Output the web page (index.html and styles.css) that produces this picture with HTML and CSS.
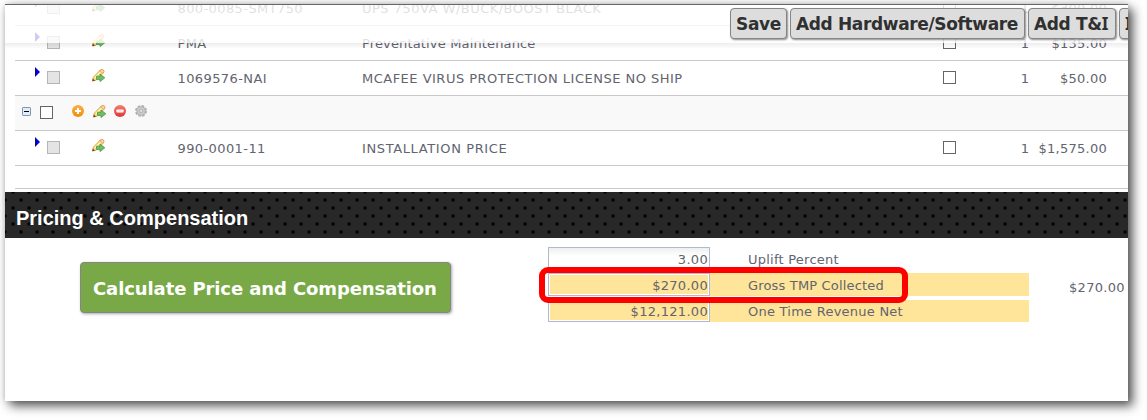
FILE: index.html
```html
<!DOCTYPE html>
<html lang="en">
<head>
<meta charset="utf-8">
<title>Pricing &amp; Compensation</title>
<link rel="stylesheet" href="styles.css">
</head>
<body>
<svg class="defs" width="0" height="0">
  <defs>
    <linearGradient id="orange" x1="0" y1="0" x2="0" y2="1"><stop offset="0" stop-color="#fbb040"/><stop offset="1" stop-color="#f28c0c"/></linearGradient>
    <linearGradient id="red" x1="0" y1="0" x2="0" y2="1"><stop offset="0" stop-color="#f47c70"/><stop offset="1" stop-color="#d93a35"/></linearGradient>
    <symbol id="pencil" viewBox="0 0 13 13">
      <path d="M0.6 11.9 L1.3 8.2 L8.3 1 Q10.2 0 11.5 1.2 Q12.3 2.5 11.3 4 L4 11.3 Z" fill="#f8dc80" stroke="#cf9a48" stroke-width=".8"/>
      <path d="M7.6 1.6 Q10.1 -.1 11.6 1.2 Q12.4 2.6 11 4.4 Z" fill="#fbdcbd" stroke="#dc9550" stroke-width=".7"/>
      <path d="M3 8.8 L8.2 3.6" stroke="#fff4b4" stroke-width="1.4"/>
      <path d="M0.3 12.2 L.8 9.6 L3 11.8 Z" fill="#69401f"/>
      <path d="M4.5 7.2 H8 V5 L12.8 8.8 L8 12.6 V10.6 H4.5 Z" fill="#72bd60" stroke="#4c9646" stroke-width=".8"/>
    </symbol>
    <symbol id="arrow" viewBox="0 0 5 10"><path d="M0 0 L5 5 L0 10 Z" fill="#0000e6"/><path d="M.5 1 V9" stroke="#111155"/></symbol>
  </defs>
</svg>
<main class="panel">
  <section class="items">
    <div class="row">
      <svg class="arrow"><use href="#arrow"/></svg><i class="check off"></i><svg class="pencil"><use href="#pencil"/></svg>
      <span class="code">800-0085-SMT750</span><span class="desc">UPS 750VA W/BUCK/BOOST BLACK</span><i class="check"></i><span class="qty">1</span><span class="price">$300.00</span>
    </div>
    <div class="row">
      <svg class="arrow"><use href="#arrow"/></svg><i class="check off"></i><svg class="pencil"><use href="#pencil"/></svg>
      <span class="code">PMA</span><span class="desc maintenance">Preventative Maintenance</span><i class="check"></i><span class="qty">1</span><span class="price">$135.00</span>
    </div>
    <div class="row">
      <svg class="arrow"><use href="#arrow"/></svg><i class="check off"></i><svg class="pencil"><use href="#pencil"/></svg>
      <span class="code">1069576-NAI</span><span class="desc">MCAFEE VIRUS PROTECTION LICENSE NO SHIP</span><i class="check"></i><span class="qty">1</span><span class="price">$50.00</span>
    </div>
    <div class="group">
      <svg class="collapse" viewBox="0 0 9 9"><rect x=".5" y=".5" width="8" height="8" rx=".6" fill="#e4ebf3" stroke="#7898b8"/><path d="M2 4.5H7" stroke="#000"/></svg>
      <i class="check"></i>
      <div class="tools">
        <svg viewBox="0 0 12 12"><circle cx="6" cy="6" r="6" fill="url(#orange)"/><path d="M6 3V9M3 6H9" stroke="#fff" stroke-width="2"/></svg>
        <svg class="edit"><use href="#pencil"/></svg>
        <svg viewBox="0 0 12 12"><circle cx="6" cy="6" r="6" fill="url(#red)"/><rect x="2.4" y="4.6" width="7.2" height="2.8" rx=".6" fill="#fff"/><path d="M3.2 6H8.8" stroke="#eba7a2" stroke-width=".5"/></svg>
        <svg viewBox="0 0 12 12"><circle cx="6" cy="6" r="4.9" fill="#bdbdbd"/><circle cx="6" cy="6" r="5.2" fill="none" stroke="#ababab" stroke-width="1.5" stroke-dasharray="2.6 1.48"/><circle cx="6" cy="6" r="3.1" fill="none" stroke="#d0d0d0"/><circle cx="6" cy="6" r="1.4" fill="#f5f5f5" stroke="#a5a5a5" stroke-width=".6"/></svg>
      </div>
    </div>
    <div class="row">
      <svg class="arrow"><use href="#arrow"/></svg><i class="check off"></i><svg class="pencil"><use href="#pencil"/></svg>
      <span class="code">990-0001-11</span><span class="desc installation">INSTALLATION PRICE</span><i class="check"></i><span class="qty">1</span><span class="price">$1,575.00</span>
    </div>
    <div class="spacer"></div>
  </section>
  <h2 class="band">Pricing &amp; Compensation</h2>
  <section class="pricing">
    <button class="calculate">Calculate Price and Compensation</button>
    <div class="fields">
      <div class="field"><span class="value">3.00</span><span class="label">Uplift Percent</span></div>
      <div class="field marked"><span class="value">$270.00</span><span class="label gross">Gross TMP Collected</span></div>
      <div class="field marked last"><span class="value">$12,121.00</span><span class="label">One Time Revenue Net</span></div>
      <div class="highlight"></div>
    </div>
    <span class="total">$270.00</span>
  </section>
  <nav class="toolbar">
    <button class="save">Save</button><button class="hardware">Add Hardware/Software</button><button class="ti">Add T&amp;<span class="slab">I</span></button><button class="more"><span class="slab">I</span></button>
  </nav>
</main>
</body>
</html>
```
FILE: styles.css
```css
* { box-sizing: border-box; }
body {
  margin: 0;
  height: 420px;
  padding: 4px 19px 19px 5px;
  overflow: hidden;
  background: #fff;
  color: #62646f;
  font: 13px/16px "DejaVu Sans", sans-serif;
}
.defs { position: absolute; }
.panel {
  position: relative;
  height: 397px;
  border-top: 1px solid #666;
  background: #fff;
  box-shadow: 5px 5px 10px rgba(0,0,0,.64), 0 0 7px rgba(0,0,0,.2);
}
.items { height: 187px; padding-left: 10px; overflow: hidden; }
.row {
  display: grid;
  grid-template-columns: 12px 45px 85.5px 184.5px 581px 48px 38px 78px;
  height: 35px;
  padding-left: 20px;
  border-bottom: 1px solid #c8c8c8;
  white-space: nowrap;
}
.row:first-child { margin-top: -14px; }
.row span { padding-top: 10px; }
.row .check { margin-top: 10px; }
.check { display: block; width: 13px; height: 13px; border: 1px solid #666; background: #fff; }
.check.off { border-color: #b5b5b5; background: #e4e4e4; }
.arrow { width: 5px; height: 10px; margin-top: 6px; }
.pencil { width: 13px; height: 13px; margin-top: 8px; }
.code { letter-spacing: .4px; }
.desc { letter-spacing: .49px; }
.maintenance { letter-spacing: .15px; }
.installation { letter-spacing: .62px; }
.qty { text-align: right; }
.price { text-align: right; letter-spacing: .25px; }
.group {
  display: flex;
  height: 35px;
  padding: 9px 0 0 7px;
  border-bottom: 1px solid #c8c8c8;
  background: #f9f9f9;
}
.collapse { width: 9px; height: 9px; margin: 2px 9px 0 0; }
.group .check { margin-top: 1px; }
.tools { display: flex; gap: 9px; margin-left: 19px; }
.tools svg { width: 12px; height: 12px; }
.tools .edit { width: 13px; height: 13px; margin-right: -1px; }
.spacer { height: 23px; border-bottom: 1px solid #c8c8c8; }
.band {
  height: 46px;
  margin: 0;
  padding: 0 11px;
  color: #fff;
  font: bold 20px/52px "Liberation Sans", Arial, sans-serif;
  background-color: #282828;
  background-image:
    radial-gradient(circle at center, #000 .5px, #0c0c0c 1.3px, rgba(16,16,16,0) 2.4px),
    radial-gradient(circle at center, #000 .5px, #0c0c0c 1.3px, rgba(16,16,16,0) 2.4px);
  background-size: 16px 16px;
  background-position: 8px 0, 0 8px;
}
.pricing { display: flex; padding: 9px 0 0 75px; }
.calculate {
  width: 371px;
  height: 51px;
  margin: 15px 97px 0 0;
  padding: 2px 0 0 12px;
  border: 1px solid #858585;
  border-radius: 4px;
  background: #78a946;
  box-shadow: 1px 1px 3px rgba(0,0,0,.35);
  color: #fff;
  font: bold 18px "DejaVu Sans", sans-serif;
  letter-spacing: -.1px;
  text-align: left;
  white-space: nowrap;
}
.fields { position: relative; width: 481px; }
.field { display: flex; height: 23px; margin-bottom: 3px; }
.value {
  width: 162px;
  padding: 4px 1px 0 0;
  border: 1px solid #b5b7cb;
  background: linear-gradient(#eef0f0, #fff 40%);
  letter-spacing: .3px;
  text-align: right;
}
.label { flex: 1; padding: 5px 0 0 38px; white-space: nowrap; letter-spacing: .24px; }
.gross { letter-spacing: .17px; }
.marked .value { background: #ffe599; box-shadow: inset 0 0 0 1px #fff; }
.marked .label { background: #ffe599; }
.last .label { margin-top: 1px; padding-top: 4px; }
.highlight {
  position: absolute;
  left: -9px;
  top: 20px;
  width: 369px;
  height: 36px;
  border: 6px solid #f00;
  border-radius: 9px;
}
.total { margin: 33px 0 0 40px; letter-spacing: .3px; }
.toolbar {
  position: absolute;
  inset: 0 0 auto;
  display: flex;
  height: 38px;
  padding: 3px 0 0 725px;
  gap: 3px;
  overflow: hidden;
  background: rgba(255,255,255,.8);
}
.panel::after {
  content: "";
  position: absolute;
  left: 0;
  right: 0;
  top: 38px;
  height: 6px;
  background: linear-gradient(rgba(0,0,0,.07), rgba(0,0,0,0));
}
.toolbar button {
  flex: none;
  height: 31px;
  padding: 0 0 0 5px;
  border: 1px solid #858585;
  border-radius: 4px;
  background: #ddd;
  box-shadow: 1px 1px 2px rgba(0,0,0,.45);
  color: #303030;
  font: bold 17px "DejaVu Sans", sans-serif;
  letter-spacing: -.36px;
  text-align: left;
  white-space: nowrap;
}
.slab { font-family: "Noto Sans", "Open Sans", sans-serif; line-height: 1; }
.toolbar .save { width: 57px; }
.toolbar .hardware { width: 235px; }
.toolbar .ti { width: 88px; }
.toolbar .more { width: 80px; }
```
